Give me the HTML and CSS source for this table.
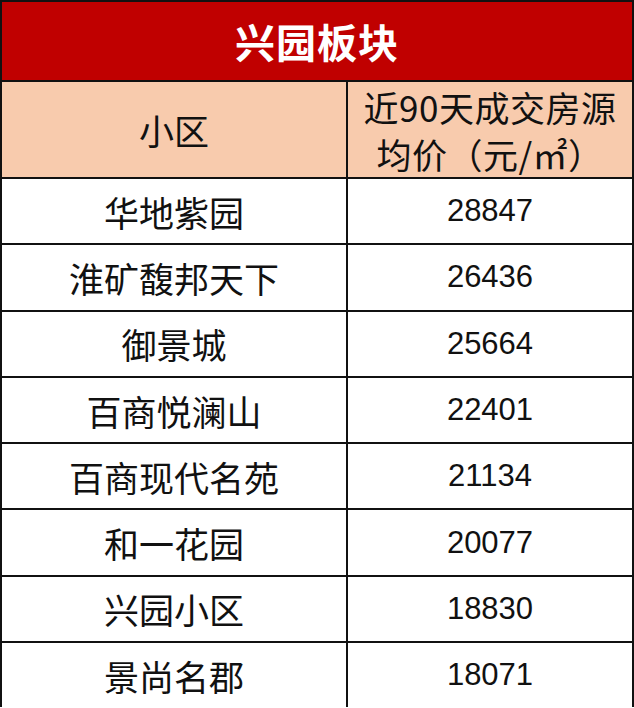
FILE: index.html
```html
<!DOCTYPE html>
<html lang="zh-CN">
<head>
<meta charset="utf-8">
<title>兴园板块</title>
<link rel="stylesheet" href="styles.css">
</head>
<body>
<div class="sheet">
  <div class="title">兴园板块</div>
  <div class="head name">小区</div>
  <div class="head price">近90天成交房源<br>均价（元/㎡）</div>
  <div class="cell name">华地紫园</div><div class="cell num">28847</div>
  <div class="cell name">淮矿馥邦天下</div><div class="cell num">26436</div>
  <div class="cell name">御景城</div><div class="cell num">25664</div>
  <div class="cell name">百商悦澜山</div><div class="cell num">22401</div>
  <div class="cell name">百商现代名苑</div><div class="cell num">21134</div>
  <div class="cell name">和一花园</div><div class="cell num">20077</div>
  <div class="cell name">兴园小区</div><div class="cell num">18830</div>
  <div class="cell name">景尚名郡</div><div class="cell num">18071</div>
</div>
</body>
</html>
```
FILE: styles.css
```css
html, body {
  margin: 0;
  padding: 0;
  background: #ffffff;
}
.sheet {
  width: 634px;
  box-sizing: border-box;
  display: grid;
  grid-template-columns: 344px 1fr;
  grid-template-rows: 78px 95px repeat(8, 64.3px);
  gap: 2px;
  padding: 2px 2px 0 2px;
  background: #111111;
  font-family: "Noto Sans CJK SC", "Noto Sans", sans-serif;
  color: #111111;
}
.title {
  grid-column: 1 / 3;
  background: #c00000;
  color: #ffffff;
  font-weight: 700;
  font-size: 40px;
  display: flex;
  align-items: center;
  justify-content: center;
  letter-spacing: 1px;
}
.head {
  background: #f8cbad;
  display: flex;
  align-items: center;
  justify-content: center;
  text-align: center;
  font-size: 35px;
}
.head.price {
  line-height: 47px;
  font-size: 35px;
  letter-spacing: 0.5px;
}
.cell {
  background: #ffffff;
  display: flex;
  align-items: center;
  justify-content: center;
  font-size: 35px;
}
.cell.num {
  font-family: "Liberation Sans", "Noto Sans", sans-serif;
  font-size: 31px;
}
```
